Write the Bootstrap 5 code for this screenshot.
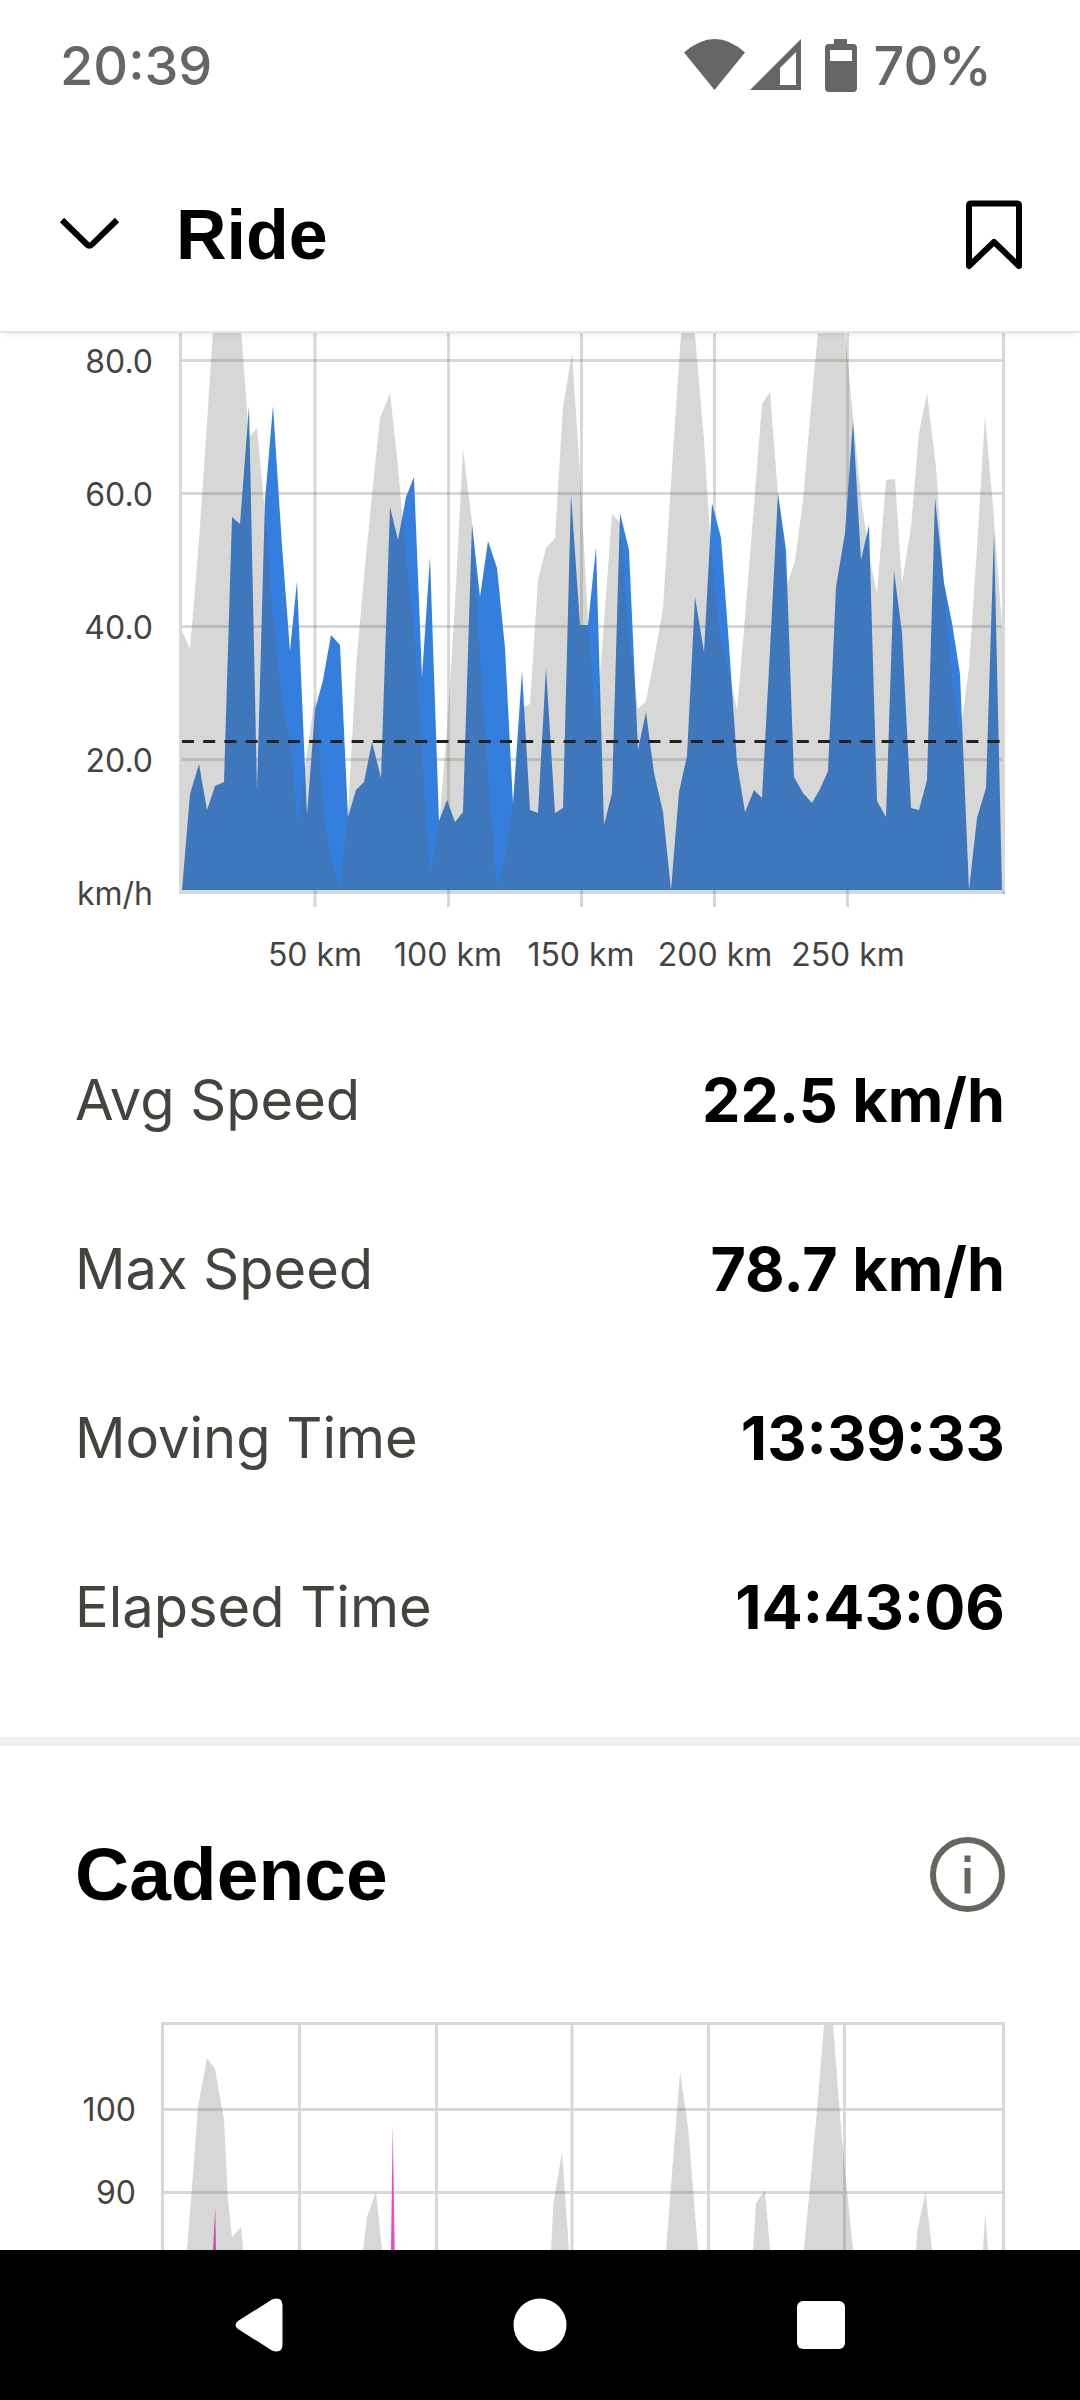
<!DOCTYPE html>
<html lang="en">
<head>
<meta charset="utf-8">
<meta name="viewport" content="width=device-width, initial-scale=1">
<title>Ride</title>
<link href="https://cdn.jsdelivr.net/npm/bootstrap@5.3.0/dist/css/bootstrap.min.css" rel="stylesheet">
<style>
body { font-family: Inter, "Noto Sans", sans-serif; color: #000; background: #fff; }
.status-bar { height: 132px; padding: 0 88px 0 60px; color: #666; font-size: 54px; line-height: 64px; font-weight: 500; }
.app-header { height: 201px; padding: 6px 56px 0 58px; border-bottom: 2px solid #e4e4e4; box-shadow: 0 6px 6px -4px rgba(0,0,0,.08); z-index: 1; }
.app-header h1, .section-title { font-family: "Liberation Sans", sans-serif; font-weight: 700; }
.app-header h1 { font-size: 70px; line-height: 80px; margin-left: 55px; }
.section-title { font-size: 75px; line-height: 84px; }
.icon-btn { padding: 0; border: 0; line-height: 0; }
.chart { display: block; width: 100%; height: auto; }
.chart text { font-size: 32px; fill: #44443f; }
.stat { height: 169px; }
.stat dt { font-size: 56px; line-height: 64px; font-weight: 400; color: #44443f; }
.stat dd { font-size: 61px; line-height: 64px; font-weight: 700; }
.stats, .section-head { padding: 0 75px; }
.stats { padding-bottom: 46px; border-bottom: 9px solid #f1f1ef; }
.section-head { height: 256px; }
.nav-keys { height: 150px; padding: 0 118px; }
.grid-line { stroke: #62625b; stroke-opacity: .25; stroke-width: 3; fill: none; }
.terrain { fill: #61615a; fill-opacity: .25; }
.speed { fill: #347fdd; }
.cadence { fill: #e84cc8; }
.average { stroke: #222; stroke-width: 3; stroke-dasharray: 12 9.2; }
</style>
</head>
<body>
<div class="d-flex flex-column vh-100 overflow-hidden">
  <div class="status-bar d-flex align-items-center justify-content-between flex-shrink-0">
    <span>20:39</span>
    <span class="d-flex align-items-center">
      <svg width="174" height="56" viewBox="0 0 174 56" fill="#666" aria-hidden="true">
        <path d="M0 14.500Q31-12.500 61 14.500L30.500 52z"/>
        <path fill-rule="evenodd" d="M66 52 117 1v51zM96 30v17h16V14z"/>
        <path fill-rule="evenodd" d="M150 1h13v5h6q4 0 4 4v40q0 4-4 4h-24q-4 0-4-4V10q0-4 4-4h5zM146 12v11h22V12z"/>
      </svg>
      <span class="ms-3">70%</span>
    </span>
  </div>

  <header class="app-header d-flex align-items-center flex-shrink-0 bg-white position-relative">
    <button type="button" class="btn icon-btn" aria-label="Close">
      <svg width="63" height="48" viewBox="0 0 63 48" fill="none" stroke="#000" stroke-width="6"><path d="M4 9 28.500 33q3 3 6 0L59 9"/></svg>
    </button>
    <h1 class="mb-0">Ride</h1>
    <button type="button" class="btn icon-btn ms-auto" aria-label="Save">
      <svg width="60" height="72" viewBox="0 0 60 72" fill="none" stroke="#000" stroke-width="6" stroke-linejoin="round"><path d="M7 4.500h46q2 0 2 2V67L30 43 5 67V6.500q0-2 2-2z"/></svg>
    </button>
  </header>

  <main class="flex-grow-1 overflow-hidden">
    <section>
      <svg class="chart" viewBox="0 333 1080 682" role="img" aria-label="Speed by distance">
        <path class="grid-line" d="M182 360.500H1002M182 493.500H1002M182 626.500H1002M182 759.500H1002M179 892.500H1005"/>
        <path class="grid-line" d="M180.500 332V891M315 332V907M448.500 332V907M581.500 332V907M714.500 332V907M847.500 332V907M1003.500 332V894"/>
        <polygon class="speed" points="182,890 190,794 199,764 207,810 215,786 224,782 232,517 240,524 249,406 257,791 265,500 273,406 282,546 290,651 297,581 307,815 315,710 323,680 331,635 340,645 348,817 356,790 364,782 372,742 381,778 390,507 398,540 406,497 414,477 422,677 430,557 439,821 447,800 455,822 463,812 472,524 480,597 488,541 497,568 505,648 513,804 522,671 530,810 538,813 546,668 555,813 563,808 571,494 580,625 588,625 596,547 604,825 612,793 620,513 629,550 638,750 646,712 654,773 663,812 671,890 679,792 687,756 695,597 704,652 712,503 721,538 729,645 737,763 745,812 754,790 762,798 770,650 778,493 786,550 794,777 803,793 812,803 820,789 828,771 836,587 845,533 853,421 861,560 869,525 877,801 886,817 894,571 902,633 911,808 919,810 927,780 935,498 944,583 952,623 960,674 969,890 977,818 986,788 994,532 1002,890"/>
        <polygon class="terrain" points="182,891 182,631 190,649 199,540 207,423 215,300 228,260 240,315 249,437 257,428 265,513 273,617 282,703 290,738 298,824 307,753 315,697 324,817 332,863 340,889 348,812 356,667 364,577 372,495 380,418 390,393 398,467 406,557 414,625 422,755 430,874 439,826 447,730 455,604 463,449 472,522 480,655 488,777 497,886 505,860 513,800 522,708 530,704 538,580 546,548 555,538 563,407 572,353 580,473 588,620 596,727 604,622 612,514 620,523 629,640 638,709 646,701 654,660 663,608 671,483 679,363 687,250 695,335 704,440 712,565 721,640 729,673 737,710 745,618 754,505 762,404 770,392 778,495 787,585 795,561 803,500 811,407 820,310 828,220 836,250 845,332 853,417 861,497 869,555 877,594 886,480 895,479 902,583 911,527 919,433 927,393 936,467 944,585 952,680 960,735 969,668 977,547 985,416 993,507 1002,625 1002,891"/>
        <path class="average" d="M182 741.500H1002"/>
        <g text-anchor="end">
          <text x="153" y="373">80.0</text><text x="153" y="506">60.0</text><text x="153" y="639">40.0</text><text x="153" y="772">20.0</text><text x="153" y="905">km/h</text>
        </g>
        <g text-anchor="middle">
          <text x="315" y="966">50 km</text><text x="448" y="966">100 km</text><text x="581" y="966">150 km</text><text x="715" y="966">200 km</text><text x="848" y="966">250 km</text>
        </g>
      </svg>
      <dl class="stats mb-0">
        <div class="stat d-flex align-items-center justify-content-between"><dt>Avg Speed</dt><dd class="mb-0">22.5 km/h</dd></div>
        <div class="stat d-flex align-items-center justify-content-between"><dt>Max Speed</dt><dd class="mb-0">78.7 km/h</dd></div>
        <div class="stat d-flex align-items-center justify-content-between"><dt>Moving Time</dt><dd class="mb-0">13:39:33</dd></div>
        <div class="stat d-flex align-items-center justify-content-between"><dt>Elapsed Time</dt><dd class="mb-0">14:43:06</dd></div>
      </dl>
    </section>
    <section>
      <div class="section-head d-flex align-items-center justify-content-between">
        <h2 class="section-title mb-0">Cadence</h2>
        <button type="button" class="btn icon-btn" aria-label="About cadence">
          <svg width="75" height="75" viewBox="0 0 75 75" fill="none" stroke="#66665f" stroke-width="6"><circle cx="37.500" cy="37.500" r="34.500"/><path d="M37.500 18.500v6.500M37.500 31v25.500"/></svg>
        </button>
      </div>
      <svg class="chart" viewBox="0 2002 1080 248" role="img" aria-label="Cadence by distance">
        <path class="grid-line" d="M164 2109.500H1002M164 2192.500H1002M299.500 2025V2250M436.500 2025V2250M572 2025V2250M708.500 2025V2250M844.500 2025V2250"/>
        <path class="grid-line" d="M162.500 2250V2023.500H1003.500V2250"/>
        <path class="cadence" d="M213 2250 215.300 2208 216 2250zM391 2250 392.700 2125 394.700 2250z"/>
        <path class="terrain" d="M187 2250 192 2187 198 2107 207 2058 215 2069 224 2120 228 2200 232 2237 241 2227 243 2250zM363 2250 367 2217 376 2192 382 2250zM551 2250 553.500 2203 562 2152 569 2250zM666 2250 680 2072 688 2127 698 2250zM753 2250 756 2203 765 2190 770 2250zM804 2250 817 2110 824 2025H833L842 2140 853 2250zM916 2250 917 2233 925.500 2192 932 2250zM983 2250 985.300 2213 988 2250z"/>
        <g text-anchor="end"><text x="136" y="2121">100</text><text x="136" y="2204">90</text></g>
      </svg>
    </section>
  </main>

  <nav class="nav-keys row g-0 bg-black align-items-center flex-shrink-0 text-center" aria-label="System">
    <div class="col"><button type="button" class="btn icon-btn" aria-label="Back"><svg width="48" height="54" viewBox="0 0 48 54" fill="#fff"><path d="M3 23 37 1.500Q47-2 47.500 7v40Q47 56 37 52.500L3 31Q-2 27 3 23z"/></svg></button></div>
    <div class="col"><button type="button" class="btn icon-btn" aria-label="Home"><svg width="54" height="54" viewBox="0 0 54 54" fill="#fff"><circle cx="27" cy="27" r="26.500"/></svg></button></div>
    <div class="col"><button type="button" class="btn icon-btn" aria-label="Recent apps"><svg width="48" height="48" viewBox="0 0 48 48" fill="#fff"><rect width="48" height="48" rx="6"/></svg></button></div>
  </nav>
</div>
<script src="https://cdn.jsdelivr.net/npm/bootstrap@5.3.0/dist/js/bootstrap.bundle.min.js"></script>
</body>
</html>
